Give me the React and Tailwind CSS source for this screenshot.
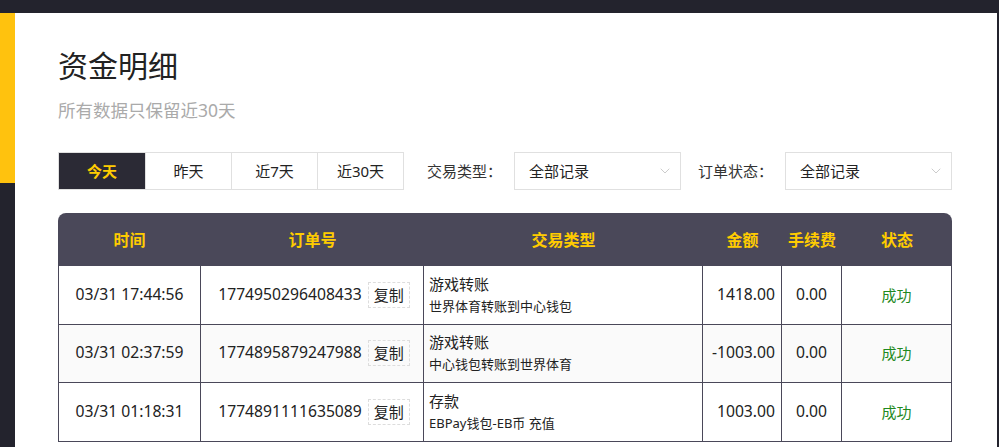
import { ChevronDown } from 'lucide-react'

const rows = [
  { time: '03/31 17:44:56', no: '1774950296408433', type: '游戏转账', desc: '世界体育转账到中心钱包', amount: '1418.00', fee: '0.00', status: '成功' },
  { time: '03/31 02:37:59', no: '1774895879247988', type: '游戏转账', desc: '中心钱包转账到世界体育', amount: '-1003.00', fee: '0.00', status: '成功' },
  { time: '03/31 01:18:31', no: '1774891111635089', type: '存款', desc: 'EBPay钱包-EB币 充值', amount: '1003.00', fee: '0.00', status: '成功' },
]

const tabs = ['今天', '昨天', '近7天', '近30天']

const Select = ({ label, labelClass }) => (
  <div className="flex items-center shrink-0">
    <span className={`text-[15px] text-[#333] whitespace-nowrap ${labelClass}`}>{label}</span>
    <div className="w-[167px] h-[38px] border border-[#e0e0e0] flex items-center justify-between pl-[14px] pr-[7px] text-[15px] text-[#222]">
      <span>全部记录</span>
      <ChevronDown size={16} strokeWidth={1.5} className="text-[#ccc]" />
    </div>
  </div>
)

export default function App() {
  return (
    <div
      className="flex h-[447px] w-[999px] overflow-hidden bg-[#23232d]"
      style={{ fontFamily: '"Noto Sans", "Noto Sans CJK SC", sans-serif' }}
    >
      {/* left strip */}
      <div className="w-[15px] shrink-0 flex flex-col pt-[13px]">
        <div className="h-[170px] bg-[#ffc20e]"></div>
      </div>

      <div className="flex-1 flex flex-col pt-[13px] pr-[2px]">
        <main className="flex-1 bg-white pl-[43px] pr-[44px] pt-[32px]">
          {/* Header */}
          <h1 className="text-[30px] leading-[42px] text-[#222] font-normal">资金明细</h1>
          <p className="text-[17.5px] leading-[24px] text-[#aaa] mt-[11px]">所有数据只保留近30天</p>

          {/* Filters */}
          <div className="flex items-center mt-[30px]">
            <div className="flex border border-[#e0e0e0] h-[38px] shrink-0">
              {tabs.map((t, i) => (
                <div
                  key={t}
                  className={
                    i === 0
                      ? 'w-[86px] flex items-center justify-center bg-[#2b2a35] text-[#ffcc00] font-bold text-[15px]'
                      : 'w-[86px] flex items-center justify-center border-l border-[#e0e0e0] text-[#222] text-[15px]'
                  }
                >
                  {t}
                </div>
              ))}
            </div>
            <Select label="交易类型：" labelClass="w-[110px] pl-[23px]" />
            <Select label="订单状态：" labelClass="w-[104px] pl-[17px]" />
          </div>

          {/* Table */}
          <div className="mt-[23px] w-[894px]">
            <div className="grid grid-cols-[143px_223px_279px_79px_60px_110px] h-[53px] bg-[#4a4859] rounded-t-[8px] text-[#ffcc00] font-bold text-[16px]">
              {['时间', '订单号', '交易类型', '金额', '手续费', '状态'].map((h) => (
                <div key={h} className="flex items-center justify-center">{h}</div>
              ))}
            </div>
            <div className="border-l border-[#4a4859]">
              {rows.map((r, i) => (
                <div
                  key={r.no}
                  className={`grid grid-cols-[142px_223px_279px_79px_60px_110px] h-[58.5px] border-b border-[#4a4859] text-[15px] text-[#222] ${i === 1 ? 'bg-[#fafafa]' : 'bg-white'}`}
                >
                  <div className="flex items-center justify-center border-r border-[#4a4859] text-[15.7px]">{r.time}</div>
                  <div className="flex items-center justify-center gap-[6px] border-r border-[#4a4859] pl-[4px]">
                    <span className="text-[15.7px]">{r.no}</span>
                    <span className="border border-dashed border-[#ddd] px-[5px] h-[26px] flex items-center">复制</span>
                  </div>
                  <div className="flex flex-col justify-center pl-[5px] border-r border-[#4a4859]">
                    <span className="text-[15px] leading-[20px]">{r.type}</span>
                    <span className="text-[13px] leading-[20px] mt-[2px]">{r.desc}</span>
                  </div>
                  <div className="flex items-center justify-end pr-[6px] border-r border-[#4a4859] text-[15.7px]">{r.amount}</div>
                  <div className="flex items-center justify-center border-r border-[#4a4859] text-[15.7px]">{r.fee}</div>
                  <div className="flex items-center justify-center border-r border-[#4a4859] text-[#1f8a1f]">{r.status}</div>
                </div>
              ))}
            </div>
          </div>
        </main>
      </div>
    </div>
  )
}
